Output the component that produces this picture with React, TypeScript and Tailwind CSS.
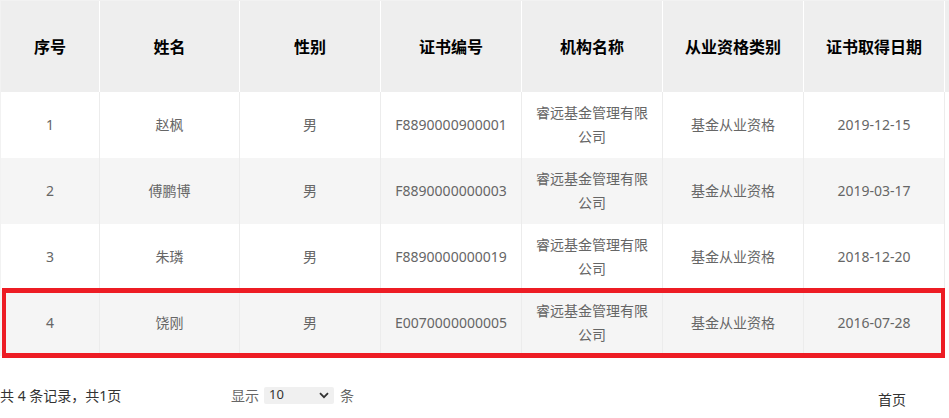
import React from "react";

const cols = [99, 140, 141, 141, 141, 141, 141];
const headers = ["序号", "姓名", "性别", "证书编号", "机构名称", "从业资格类别", "证书取得日期"];
const rows = [
  ["1", "赵枫", "男", "F8890000900001", "睿远基金管理有限公司", "基金从业资格", "2019-12-15"],
  ["2", "傅鹏博", "男", "F8890000000003", "睿远基金管理有限公司", "基金从业资格", "2019-03-17"],
  ["3", "朱璘", "男", "F8890000000019", "睿远基金管理有限公司", "基金从业资格", "2018-12-20"],
  ["4", "饶刚", "男", "E0070000000005", "睿远基金管理有限公司", "基金从业资格", "2016-07-28"],
];

const font = { fontFamily: '"Noto Sans", "Noto Sans CJK SC", sans-serif' };

export default function App() {
  return (
    <div className="relative w-[949px] h-[418px] overflow-hidden bg-white" style={font}>
      <div className="border-t border-l border-[#f2f2f2]">
        {/* header */}
        <div className="flex h-[91px] bg-[#eeeeee]">
          {headers.map((h, i) => (
            <div
              key={i}
              className="flex shrink-0 items-center justify-center border-r border-white text-[16px] font-bold text-black"
              style={{ width: cols[i] }}
            >
              {h}
            </div>
          ))}
          <div className="flex-1" />
        </div>
        {rows.map((r, ri) => (
          <div key={ri} className={`flex h-[66px] ${ri % 2 === 1 ? "bg-[#f5f5f5]" : "bg-white"}`}>
            {r.map((c, ci) => (
              <div
                key={ci}
                className="flex shrink-0 items-center justify-center border-r border-[#ececec] px-[10px] text-center text-[14px] leading-[24px] text-[#666666]"
                style={{ width: cols[ci] }}
              >
                {c}
              </div>
            ))}
            <div className="flex-1 bg-white" />
          </div>
        ))}
      </div>

      {/* highlight box */}
      <div className="absolute left-[2px] top-[288px] h-[70px] w-[943px] border-y-[5px] border-x-[4px] border-[#ed1c24]" />

      {/* footer */}
      <div className="mt-[29px] flex h-[20px] items-center text-[14px]">
        <div className="w-[231px] shrink-0 text-[#333333]">共 4 条记录，共1页</div>
        <div className="shrink-0 text-[#666666]">显示</div>
        <div className="ml-[5px] flex h-[17px] w-[70px] shrink-0 items-center justify-between rounded-[2px] bg-[#f0f0f0] pl-[5px] pr-[5px] text-[13px] text-[#333333]">
          <span>10</span>
          <svg width="10" height="7" viewBox="0 0 10 7">
            <path d="M1 1.2 L5 5.2 L9 1.2" fill="none" stroke="#333" strokeWidth="1.8" />
          </svg>
        </div>
        <div className="ml-[6px] shrink-0 text-[#666666]">条</div>
        <div className="ml-[524px] mt-[8px] shrink-0 text-[#333333]">首页</div>
      </div>
    </div>
  );
}
